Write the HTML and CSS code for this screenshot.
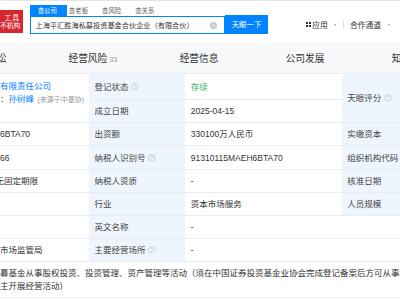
FILE: index.html
```html
<!DOCTYPE html>
<html lang="zh-CN">
<head>
<meta charset="utf-8">
<title>企业信息</title>
<link rel="stylesheet" href="styles.css">
</head>
<body>
<header class="topbar">
  <div class="logo"><span class="logo-l1">工具</span><span class="logo-l2">不机构</span></div>
  <div class="search">
    <nav class="search-tabs">
      <span class="stab active">查公司</span>
      <span class="stab">查老板</span>
      <span class="stab">查风险</span>
      <span class="stab">查关系</span>
    </nav>
    <div class="search-row">
      <div class="search-input">
        <span class="query">上海平汇胜海私募投资基金合伙企业（有限合伙）</span>
        <svg class="clear" viewBox="0 0 8 8" width="7" height="7"><circle cx="4" cy="4" r="4" fill="#c4c7cc"/><path d="M2.6 2.6L5.4 5.4M5.4 2.6L2.6 5.4" stroke="#fff" stroke-width="0.9"/></svg>
      </div>
      <button class="search-btn" type="button">天眼一下</button>
    </div>
  </div>
  <nav class="topnav">
    <svg class="grid-ico" viewBox="0 0 5 5" width="5" height="5"><rect x="0" y="0" width="2" height="2" fill="#333"/><rect x="3" y="0" width="2" height="2" fill="#333"/><rect x="0" y="3" width="2" height="2" fill="#333"/><rect x="3" y="3" width="2" height="2" fill="#333"/></svg>
    <span class="nav-text first">应用</span><i class="caret"></i>
    <span class="divider"></span>
    <span class="nav-text">合作通道</span><i class="caret"></i>
  </nav>
</header>

<nav class="tabs">
  <span class="tab">法律诉讼</span>
  <span class="tab">经营风险<span class="count">33</span></span>
  <span class="tab">经营信息</span>
  <span class="tab">公司发展</span>
  <span class="tab">知识产权</span>
</nav>

<section class="info">
  <div class="c lead span2">
    <span class="link">有限责任公司</span>
    <span class="rep"><span class="colon">：</span><span class="link">孙树峰</span><span class="src">(来源于中基协)</span></span>
  </div>
  <div class="c lbl">登记状态<svg class="help" viewBox="0 0 8 8"><circle cx="4" cy="4" r="3.5" fill="none" stroke="#b3c3d7" stroke-width="0.7"/><path d="M2.9 3.1a1.1 1.1 0 1 1 1.6 1c-0.4 0.2-0.5 0.4-0.5 0.8" fill="none" stroke="#b3c3d7" stroke-width="0.7"/><circle cx="4" cy="5.9" r="0.4" fill="#b3c3d7"/></svg></div>
  <div class="c val green">存续</div>
  <div class="c lbl span2">天眼评分<svg class="help" viewBox="0 0 8 8"><circle cx="4" cy="4" r="3.5" fill="none" stroke="#b3c3d7" stroke-width="0.7"/><path d="M2.9 3.1a1.1 1.1 0 1 1 1.6 1c-0.4 0.2-0.5 0.4-0.5 0.8" fill="none" stroke="#b3c3d7" stroke-width="0.7"/><circle cx="4" cy="5.9" r="0.4" fill="#b3c3d7"/></svg></div>
  <div class="c val span2"></div>

  <div class="c lbl">成立日期</div>
  <div class="c val">2025-04-15</div>

  <div class="c lead">6BTA70</div>
  <div class="c lbl">出资额</div>
  <div class="c val">330100万人民币</div>
  <div class="c lbl">实缴资本</div>
  <div class="c val">-</div>

  <div class="c lead">66</div>
  <div class="c lbl">纳税人识别号<svg class="help" viewBox="0 0 8 8"><circle cx="4" cy="4" r="3.5" fill="none" stroke="#b3c3d7" stroke-width="0.7"/><path d="M2.9 3.1a1.1 1.1 0 1 1 1.6 1c-0.4 0.2-0.5 0.4-0.5 0.8" fill="none" stroke="#b3c3d7" stroke-width="0.7"/><circle cx="4" cy="5.9" r="0.4" fill="#b3c3d7"/></svg></div>
  <div class="c val">91310115MAEH6BTA70</div>
  <div class="c lbl">组织机构代码<svg class="help" viewBox="0 0 8 8"><circle cx="4" cy="4" r="3.5" fill="none" stroke="#b3c3d7" stroke-width="0.7"/><path d="M2.9 3.1a1.1 1.1 0 1 1 1.6 1c-0.4 0.2-0.5 0.4-0.5 0.8" fill="none" stroke="#b3c3d7" stroke-width="0.7"/><circle cx="4" cy="5.9" r="0.4" fill="#b3c3d7"/></svg></div>
  <div class="c val">MAEH6BTA7</div>

  <div class="c lead"><span class="cut">无固定期限</span></div>
  <div class="c lbl">纳税人资质</div>
  <div class="c val">-</div>
  <div class="c lbl">核准日期</div>
  <div class="c val">2025-04-15</div>

  <div class="c lead"></div>
  <div class="c lbl">行业</div>
  <div class="c val">资本市场服务</div>
  <div class="c lbl">人员规模</div>
  <div class="c val">-</div>

  <div class="c lead"></div>
  <div class="c lbl">英文名称</div>
  <div class="c val wide">-</div>

  <div class="c lead">市场监管局</div>
  <div class="c lbl">主要经营场所<svg class="help" viewBox="0 0 8 8"><circle cx="4" cy="4" r="3.5" fill="none" stroke="#b3c3d7" stroke-width="0.7"/><path d="M2.9 3.1a1.1 1.1 0 1 1 1.6 1c-0.4 0.2-0.5 0.4-0.5 0.8" fill="none" stroke="#b3c3d7" stroke-width="0.7"/><circle cx="4" cy="5.9" r="0.4" fill="#b3c3d7"/></svg></div>
  <div class="c val wide">-</div>

  <div class="c scope">
    <span class="line">募基金从事股权投资、投资管理、资产管理等活动（须在中国证券投资基金业协会完成登记备案后方可从事经营活动）。除依法须经批准的项目外，凭营业执照依法自</span>
    <span class="line">主开展经营活动）</span>
  </div>
</section>
</body>
</html>
```

FILE: styles.css
```css
* {
  box-sizing: border-box;
  margin: 0;
  padding: 0;
}

html,
body {
  width: 400px;
  height: 300px;
  overflow: hidden;
}

body {
  font-family: "Liberation Sans", "Noto Sans CJK SC", sans-serif;
  color: #333;
  background: #fff;
}

/* ---------- top bar ---------- */
.topbar {
  height: 42px;
  border-top: 1px solid #e6e7ea;
  background: #fff;
  display: flex;
  align-items: flex-start;
}

.logo {
  width: 23px;
  height: 23px;
  margin-top: 9px;
  background: #d7282f;
  color: #fff;
  display: flex;
  flex-direction: column;
  padding-top: 4px;
  font-size: 6.8px;
  line-height: 8px;
  white-space: nowrap;
  overflow: hidden;
}

.logo-l1 {
  padding-left: 4.5px;
  letter-spacing: 1px;
}

.search {
  margin-left: 7px;
  margin-top: 4px;
  display: flex;
  flex-direction: column;
}

.search-tabs {
  display: flex;
  height: 11px;
}

.stab {
  font-size: 6.4px;
  line-height: 11px;
  color: #666;
  padding: 0 12px 0 2px;
  white-space: nowrap;
}

.stab.active {
  background: #0084ff;
  color: #fff;
  padding: 0 10px 0 7.7px;
}

.search-row {
  display: flex;
  align-items: flex-start;
}

.search-input {
  width: 195px;
  height: 18px;
  border: 1px solid #0084ff;
  display: flex;
  align-items: center;
  padding-left: 4.5px;
  padding-right: 6.7px;
  background: #fff;
}

.query {
  font-size: 7.2px;
  color: #333;
  white-space: nowrap;
}

.clear {
  margin-left: auto;
  display: block;
}

.search-btn {
  width: 43px;
  height: 19px;
  margin-top: -1px;
  border: none;
  background: #0084ff;
  color: #fff;
  font-family: inherit;
  font-size: 7.4px;
  line-height: 19px;
}

.topnav {
  margin-left: 38px;
  margin-top: 15.5px;
  height: 16px;
  display: flex;
  align-items: center;
  white-space: nowrap;
}

.grid-ico {
  display: block;
}

.nav-text {
  font-size: 7.8px;
  color: #333;
}

.nav-text.first {
  margin-left: 1.3px;
}

.caret {
  display: block;
  width: 0;
  height: 0;
  border-left: 1.6px solid transparent;
  border-right: 1.6px solid transparent;
  border-top: 2px solid #a0a0a0;
  margin-left: 6.5px;
}

.divider {
  display: block;
  width: 1px;
  height: 9px;
  background: #dcdfe4;
  margin: 0 5.5px 0 7px;
}

/* ---------- tab bar ---------- */
.tabs {
  height: 32px;
  margin-left: -66px;
  background: #f7f8fa;
  border-bottom: 1px solid #e8ebf0;
  display: flex;
  white-space: nowrap;
}

.tab {
  flex: 0 0 106px;
  text-align: center;
  font-size: 9.7px;
  line-height: 31px;
  padding-top: 1px;
  color: #333;
}

.count {
  font-size: 7.4px;
  color: #9a9a9a;
  margin-left: 2px;
}

/* ---------- info table ---------- */
.info {
  display: grid;
  grid-template-columns: 89px 96.3px 156.4px 96.3px 150px;
  grid-template-rows: 26px 23px 23px 24px 23px 23px 23px 23px 36px;
  width: 614px;
}

.c {
  border-bottom: 1px solid #e9edf3;
  display: flex;
  align-items: center;
  padding: 0 5.5px;
  font-size: 8.5px;
  line-height: 12px;
  white-space: nowrap;
  overflow: hidden;
  color: #333;
}

.lbl {
  background: #eef5fd;
  color: #444;
}

.lead {
  padding: 0;
}

.span2 {
  grid-row: span 2;
}

.wide {
  grid-column: span 3;
}

.lead.span2 {
  flex-direction: column;
  align-items: flex-start;
  justify-content: flex-start;
  padding-top: 6px;
  line-height: 13px;
}

.link {
  color: #0084ff;
}

.colon {
  color: #555;
}

.src {
  font-size: 7px;
  color: #999;
  margin-left: 3.5px;
}

.cut {
  margin-left: -4.4px;
}

.green {
  color: #2db25f;
}

.help {
  width: 7.5px;
  height: 7.5px;
  margin-left: 2.8px;
  flex: none;
}

.scope {
  grid-column: 1 / -1;
  flex-direction: column;
  align-items: flex-start;
  justify-content: center;
  padding: 0;
  line-height: 13px;
}

.line {
  display: block;
  white-space: nowrap;
}
```
